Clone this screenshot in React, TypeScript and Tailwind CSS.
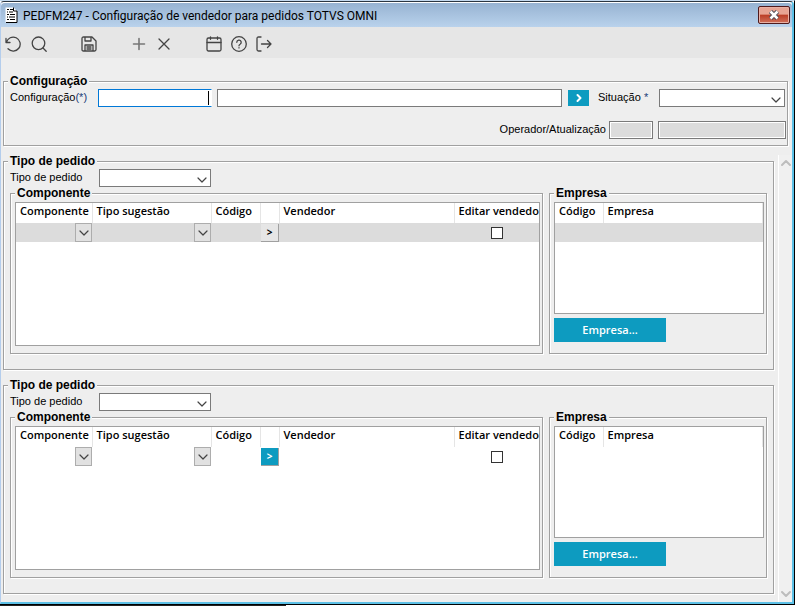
import { ChevronDown, ChevronRight, ChevronUp } from "lucide-react";
import type { ReactNode } from "react";

const ui = "font-['Liberation_Sans',Arial,sans-serif]";
const grid = "font-['Open_Sans','Noto_Sans',sans-serif]";

interface GroupProps {
  title: string;
  className?: string;
  children: ReactNode;
}

function Group({ title, className = "", children }: GroupProps) {
  return (
    <fieldset
      className={
        "min-w-0 border border-[#a0a0a0] shadow-[1px_1px_0_#fff,inset_1px_1px_0_#fff] " +
        className
      }
    >
      <legend className="ml-1 h-3 bg-[#eeeeee] px-0.5 text-xs leading-3 font-bold">
        {title}
      </legend>
      {children}
    </fieldset>
  );
}

function SelectBox({ id, className = "" }: { id: string; className?: string }) {
  return (
    <div className={"relative h-[18px] " + className}>
      <select
        id={id}
        className="block h-full w-full appearance-none border border-[#7a7a7a] bg-white"
      />
      <ChevronDown
        className="pointer-events-none absolute top-[3px] right-px size-4 text-[#444]"
        strokeWidth={1.8}
      />
    </div>
  );
}

interface ToolButtonProps {
  label: string;
  className?: string;
  children: ReactNode;
}

function ToolButton({ label, className = "", children }: ToolButtonProps) {
  return (
    <button aria-label={label} className={"size-4 " + className}>
      <svg
        viewBox="0 0 16 16"
        className="size-4"
        fill="none"
        stroke="#444"
        strokeWidth="1.3"
        strokeLinecap="round"
        strokeLinejoin="round"
      >
        {children}
      </svg>
    </button>
  );
}

function CellDrop({ label }: { label: string }) {
  return (
    <button
      aria-label={label}
      className="ml-auto flex h-[19px] w-[17px] items-center justify-center border border-[#adadad] bg-[#e1e1e1]"
    >
      <ChevronDown className="size-4 shrink-0 text-[#444]" strokeWidth={1.8} />
    </button>
  );
}

function ComponentTable({ active }: { active?: boolean }) {
  const head =
    "overflow-hidden border-r border-[#e5e5e5] pl-1 text-left align-top font-semibold whitespace-nowrap";

  return (
    <div className="h-36 overflow-hidden border border-[#a0a0a0] bg-white">
      <table className={"w-full table-fixed border-collapse text-[11px] leading-4 " + grid}>
        <colgroup>
          <col className="w-[76px]" />
          <col className="w-[119px]" />
          <col className="w-[49px]" />
          <col className="w-[19px]" />
          <col />
          <col className="w-[85px]" />
        </colgroup>
        <thead>
          <tr className="h-5">
            <th className={head}>Componente</th>
            <th className={head}>Tipo sugestão</th>
            <th className={head}>Código</th>
            <th className={head} aria-label="Buscar" />
            <th className={head}>Vendedor</th>
            <th className="overflow-hidden pl-1 text-left align-top font-semibold whitespace-nowrap">
              Editar vendedor
            </th>
          </tr>
        </thead>
        <tbody>
          <tr className={"h-[19px] " + (active ? "bg-[#dcdcdc]" : "bg-white")}>
            <td>
              <CellDrop label="Componente" />
            </td>
            <td>
              <CellDrop label="Tipo sugestão" />
            </td>
            <td />
            <td>
              <button
                className={
                  "ml-px block h-[18px] w-[18px] border-r border-b border-[#a0a0a0] text-[10px] leading-4 font-bold " +
                  (active ? "bg-[#e6e6e6] text-black" : "bg-[#0d9bc0] text-white")
                }
              >
                &gt;
              </button>
            </td>
            <td />
            <td>
              <input
                type="checkbox"
                aria-label="Editar vendedor"
                className="mx-auto block size-3 appearance-none border border-[#333] bg-white"
              />
            </td>
          </tr>
        </tbody>
      </table>
    </div>
  );
}

function CompanyTable({ active }: { active?: boolean }) {
  const head = "border-r border-[#e5e5e5] pl-1 text-left align-top font-semibold ";

  return (
    <div className="h-28 overflow-hidden border border-[#a0a0a0] bg-white">
      <table className={"w-full table-fixed border-collapse text-[11px] leading-4 " + grid}>
        <thead>
          <tr className="h-5">
            <th className={head + "w-12"}>Código</th>
            <th className={head}>Empresa</th>
          </tr>
        </thead>
        <tbody>
          <tr className={"h-[19px] " + (active ? "bg-[#dcdcdc]" : "bg-white")}>
            <td />
            <td />
          </tr>
        </tbody>
      </table>
    </div>
  );
}

function OrderType({ id, active }: { id: string; active?: boolean }) {
  return (
    <Group title="Tipo de pedido" className="pb-[15px]">
      <div className="flex pt-0.5 pl-1.5">
        <label htmlFor={id} className="w-[89px] text-[11px] leading-4">
          Tipo de pedido
        </label>
        <SelectBox id={id} className="w-28" />
      </div>
      <div className="flex gap-1.5 pr-1.5 pl-1.5">
        <Group title="Componente" className="flex-1">
          <div className="pt-[3px] pr-0.5 pb-[7px] pl-1">
            <ComponentTable active={active} />
          </div>
        </Group>
        <Group title="Empresa" className="w-[218px]">
          <div className="pt-[3px] pr-0.5 pl-1">
            <CompanyTable active={active} />
            <button
              className={
                "mt-1 block h-6 w-28 bg-[#0d9bc0] text-[11px] font-semibold text-white " + grid
              }
            >
              Empresa...
            </button>
          </div>
        </Group>
      </div>
    </Group>
  );
}

export default function App() {
  const disabled =
    "h-[18px] border border-[#7a7a7a] bg-[#dcdcdc] shadow-[inset_0_0_0_1px_#fff]";

  return (
    <div className={"flex min-h-screen flex-col bg-white pr-px text-black " + ui}>
      <div className="flex flex-1 flex-col border-t border-r border-b border-t-[#c4d9ee] border-r-black border-b-black">
        <div className="flex flex-1 flex-col rounded-t border-t border-r-2 border-b-2 border-l border-t-[#2b3540] border-r-[#5cc0e6] border-b-[#5cc0e6] border-l-[#b4cdec] bg-[#eeeeee]">
          {/* title bar */}
          <header className="flex h-[25px] items-center rounded-t border-t border-white bg-linear-to-b from-[#97b3d2] to-[#b9d2ec] pr-0.5 pl-1">
            <svg viewBox="0 0 13 16" className="h-4 w-[13px]" aria-hidden="true">
              <path d="M.5 .5h8l3.500 3.500v11.500H.5z" fill="#fff" />
              <path d="M8.500 .5V4H12M12 4v11.500H1" fill="none" stroke="#000" />
              <path
                d="M2 2.500h2M5 2.500h3M2 5h1M4 5h4M2 7.500h2M5 7.500h5M2 10h1M4 10h6M2 12.500h2M5 12.500h5"
                stroke="#000"
              />
            </svg>
            <h1 className="ml-[5px] pt-0.5 font-[Roboto,'Noto_Sans',sans-serif] text-xs">
              PEDFM247 - Configuração de vendedor para pedidos TOTVS OMNI
            </h1>
            <button
              aria-label="Fechar"
              className="ml-auto flex h-[18px] w-8 items-center justify-center rounded-xs border border-[#4f1a1c] bg-linear-to-b from-[#e8a493] from-45% via-[#bb3d25] via-50% to-[#d0705a] shadow-[inset_0_0_0_1px_#e9b0a4]"
            >
              <svg viewBox="0 0 12 10" className="h-2.5 w-3">
                <path d="M2.500 1.500l7 7M9.500 1.500l-7 7" stroke="#4a4a55" strokeWidth="4.500" />
                <path d="M2.500 1.500l7 7M9.500 1.500l-7 7" stroke="#fff" strokeWidth="2.500" />
              </svg>
            </button>
          </header>

          {/* toolbar */}
          <div className="flex h-[31px] items-center bg-[#e6e6e6] pt-0.5 pl-1">
            <ToolButton label="Desfazer">
              <path d="M1 2.500v4h4M1.400 6.300A7 7 0 1 1 3 12.800" />
            </ToolButton>
            <ToolButton label="Pesquisar" className="ml-2.5">
              <circle cx="7.500" cy="7.300" r="6.300" />
              <path d="M12 12l3.200 3.200" />
            </ToolButton>
            <ToolButton label="Salvar" className="ml-[34px]">
              <path d="M1 2.500Q1 1 2.500 1H11l4 4v8.500Q15 15 13.500 15h-11Q1 15 1 13.500zM4 1v4h6V1M4 15V9h8v6M6 11h4M6 13h4" />
            </ToolButton>
            <ToolButton label="Adicionar" className="ml-[34px]">
              <path d="M8 2.500v11M2.500 8h11" stroke="#777" strokeWidth="1.600" />
            </ToolButton>
            <ToolButton label="Excluir" className="ml-[9px]">
              <path d="M3 3l10 10M13 3L3 13" />
            </ToolButton>
            <ToolButton label="Agenda" className="ml-[34px]">
              <rect x="1" y="2" width="14" height="13" rx="1.500" />
              <path d="M1 6.500h14M4.500 .8v2.500M11.500 .8v2.500" />
            </ToolButton>
            <ToolButton label="Ajuda" className="ml-[9px]">
              <circle cx="8" cy="8" r="7.300" />
              <path d="M5.800 6.300a2.200 2.200 0 1 1 3.300 1.900Q8 8.800 8 9.800M8 11.700v.2" />
            </ToolButton>
            <ToolButton label="Sair" className="ml-[9px]">
              <path d="M5 1H2.500Q1 1 1 2.500v11Q1 15 2.500 15H5M5.500 8H15M11.500 4.500L15 8l-3.500 3.500" />
            </ToolButton>
          </div>

          {/* header form */}
          <div className="mt-[17px] pr-1 pl-0.5">
            <Group title="Configuração" className="pb-1.5">
              <div className="flex items-start pt-0.5 pr-0.5 pl-1.5">
                <label htmlFor="config" className="w-[88px] text-[11px] leading-4">
                  Configuração<span className="text-[#1b3c78]">(*)</span>
                </label>
                <div className="relative w-[114px]">
                  <input
                    id="config"
                    className="block h-[18px] w-full border border-[#0078d7] border-r-white bg-white text-[11px]"
                  />
                  {/* text caret */}
                  <span className="absolute top-0.5 right-[3px] h-3.5 w-px bg-black" />
                </div>
                <input
                  aria-label="Descrição"
                  className="ml-[5px] h-[18px] min-w-0 flex-1 border border-[#7a7a7a] bg-white"
                />
                <button
                  aria-label="Buscar"
                  className="ml-1.5 flex h-4 w-[21px] items-center justify-center self-center bg-[#0d9bc0] text-white"
                >
                  <ChevronRight className="size-3" strokeWidth={4} />
                </button>
                <label htmlFor="status" className="ml-[9px] w-[61px] text-[11px] leading-4">
                  Situação <span className="text-[#1b3c78]">*</span>
                </label>
                <SelectBox id="status" className="w-[126px]" />
              </div>
              <div className="mt-3.5 flex justify-end pr-px">
                <label htmlFor="operator" className="mr-[3px] text-[11px] leading-4">
                  Operador/Atualização
                </label>
                <input id="operator" disabled className={"w-11 " + disabled} />
                <input
                  aria-label="Atualização"
                  disabled
                  className={"ml-[5px] w-32 " + disabled}
                />
              </div>
            </Group>
          </div>

          {/* order types */}
          <div className="mt-[9px] flex flex-1">
            <main className="min-w-0 flex-1 pr-1 pl-0.5">
              <OrderType id="type-1" active />
              <div className="h-[9px]" />
              <OrderType id="type-2" />
            </main>
            <div className="flex w-3.5 flex-col items-center justify-between border-l border-white bg-[#f0f0f0] text-[#bdbdbd]">
              <ChevronUp className="size-4 shrink-0" strokeWidth={3} />
              <ChevronDown className="size-4 shrink-0" strokeWidth={3} />
            </div>
          </div>
        </div>
      </div>
      <div className="h-px w-9/25 bg-[#222]" />
    </div>
  );
}
